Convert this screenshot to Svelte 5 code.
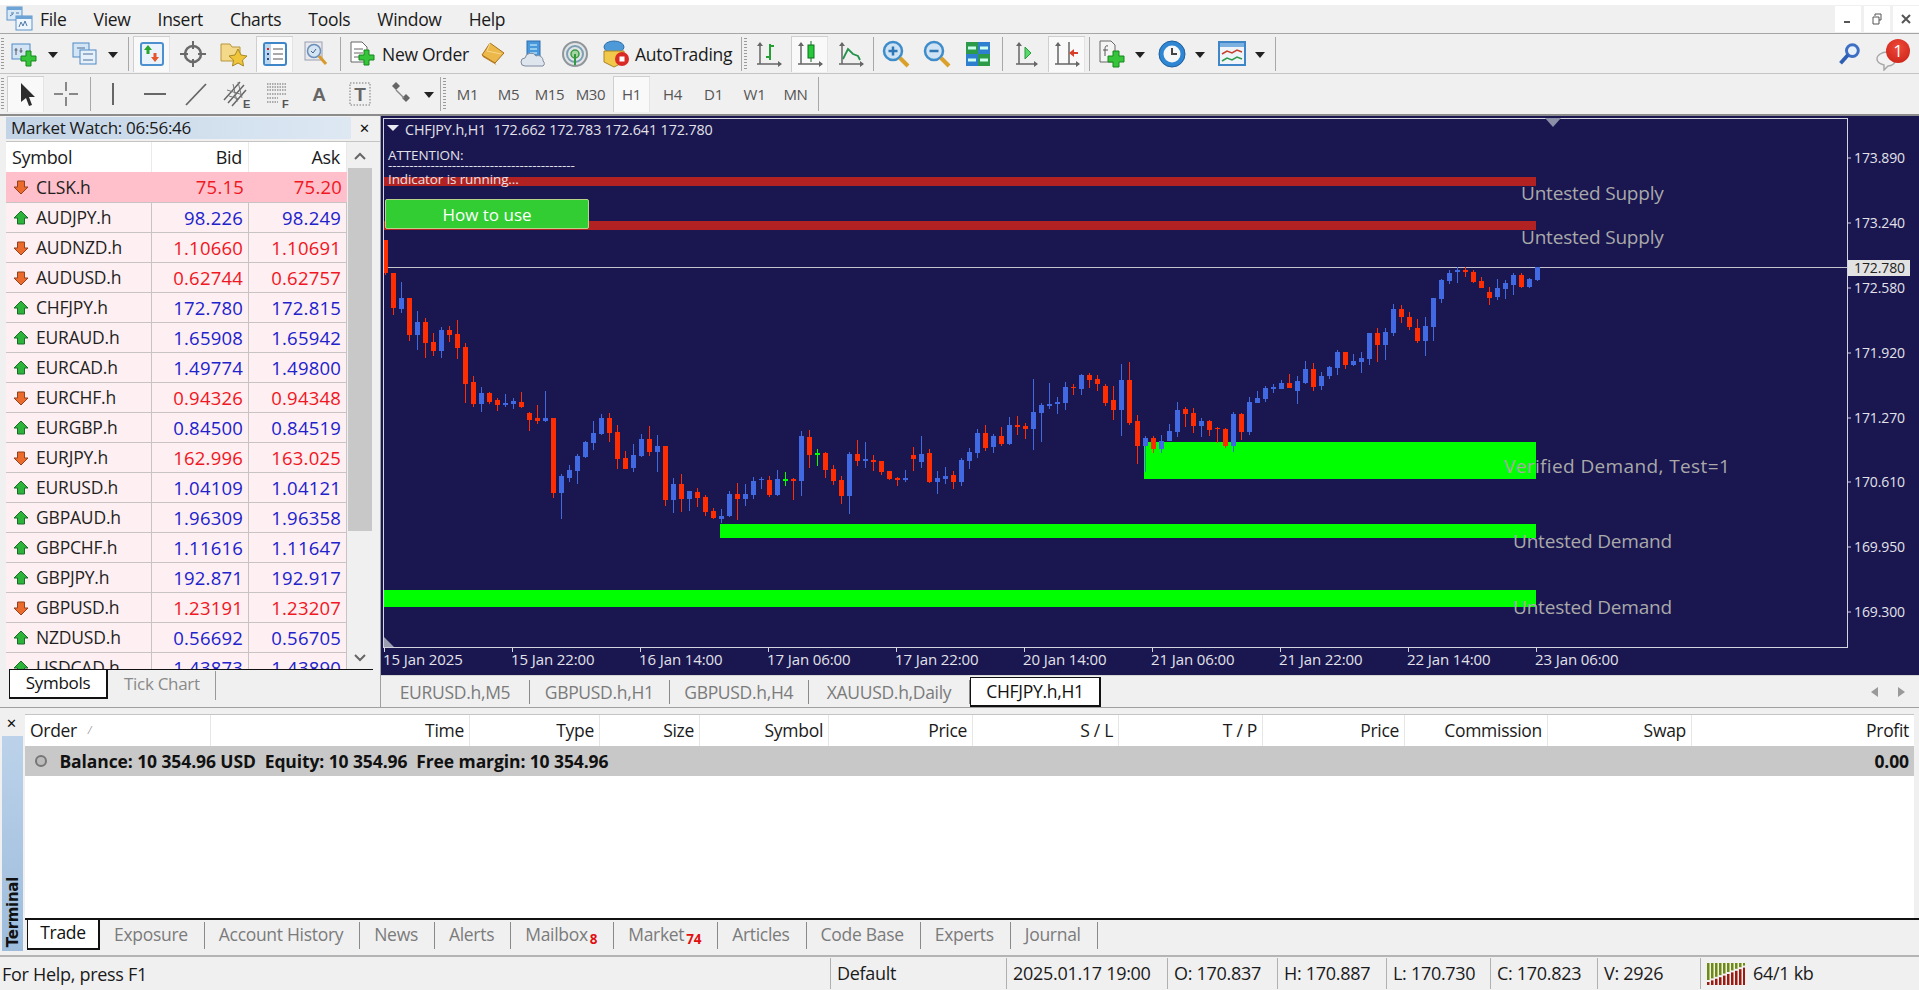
<script>
  const menu = ["File", "View", "Insert", "Charts", "Tools", "Window", "Help"];

  const quotes = [
    ["CLSK.h", "75.15", "75.20", 0],
    ["AUDJPY.h", "98.226", "98.249", 1],
    ["AUDNZD.h", "1.10660", "1.10691", 0],
    ["AUDUSD.h", "0.62744", "0.62757", 0],
    ["CHFJPY.h", "172.780", "172.815", 1],
    ["EURAUD.h", "1.65908", "1.65942", 1],
    ["EURCAD.h", "1.49774", "1.49800", 1],
    ["EURCHF.h", "0.94326", "0.94348", 0],
    ["EURGBP.h", "0.84500", "0.84519", 1],
    ["EURJPY.h", "162.996", "163.025", 0],
    ["EURUSD.h", "1.04109", "1.04121", 1],
    ["GBPAUD.h", "1.96309", "1.96358", 1],
    ["GBPCHF.h", "1.11616", "1.11647", 1],
    ["GBPJPY.h", "192.871", "192.917", 1],
    ["GBPUSD.h", "1.23191", "1.23207", 0],
    ["NZDUSD.h", "0.56692", "0.56705", 1],
    ["USDCAD.h", "1.43873", "1.43890", 1]
  ];

  const periods = ["M1", "M5", "M15", "M30", "H1", "H4", "D1", "W1", "MN"];

  // colour, wick top, body top, body bottom, wick bottom (3x px below y=230)
  const raw = [
    ["r",30,30,130,135],["r",128,128,234,255],["b",155,204,237,248],["r",204,204,315,333],["b",242,276,315,360],
    ["r",265,276,338,385],["r",310,335,362,378],["b",290,300,362,385],["r",288,300,315,335],["r",270,312,354,387],
    ["r",340,351,461,520],["r",438,456,522,530],["b",472,490,521,547],["r",487,489,516,522],["r",505,510,525,544],
    ["b",493,518,526,532],["b",505,512,522,538],["r",487,516,531,533],["r",545,548,570,603],["r",525,564,574,582],
    ["b",482,564,574,576],["r",564,564,790,805],["b",733,738,790,866],["b",705,720,744,756],["b",672,678,723,763],
    ["b",632,636,682,684],["b",572,609,639,660],["b",552,564,612,616],["r",548,564,609,636],["r",585,606,687,718],
    ["r",662,684,716,718],["b",643,675,715,726],["b",612,627,678,682],["r",588,627,666,678],["b",615,648,666,726],
    ["r",648,648,810,828],["b",745,762,810,850],["r",733,762,807,846],["b",783,784,807,843],["r",775,786,804,832],
    ["r",796,801,846,858],["r",833,843,864,866],["b",838,858,867,880],["b",783,792,858,860],["r",758,792,807,870],
    ["b",762,792,807,828],["b",742,753,795,808],["b",740,746,749,778],["r",738,750,796,800],["b",720,747,796,798],
    ["g",727,747,749,768],["r",744,747,750,810],["b",603,618,753,798],["r",600,621,675,714],["g",657,669,671,708],
    ["r",665,669,720,745],["r",706,717,753,765],["r",738,750,798,822],["b",665,672,798,852],["r",630,672,693,708],
    ["b",637,687,691,714],["r",675,690,694,722],
    ["r",693,694,726,736],["r",722,724,747,750],["r",742,744,749,768],["b",720,744,749,755],["r",650,675,688,723],
    ["b",618,672,696,714],["r",658,669,756,760],["b",723,744,756,793],["b",711,738,747,763],["r",724,735,756,778],
    ["b",683,690,756,769],["b",654,666,693,717],["b",597,609,669,684],["r",585,609,654,663],["b",612,618,651,669],
    ["r",592,618,642,648],["b",560,585,642,645],["r",558,585,591,615],["r",580,588,597,627],["b",447,546,597,660],
    ["b",520,525,548,637],["b",458,521,527,538],["b",502,516,522,553],["b",455,472,518,540],["r",462,470,474,495],
    ["b",433,434,477,496],["r",428,435,450,474],["r",435,448,461,483],["r",462,468,519,528],["r",468,510,540,570],
    ["b",402,450,540,618],["r",396,450,578,585],["r",555,573,648,702],["b",618,624,648,727],["r",618,624,656,670],
    ["b",615,632,656,670],["b",582,603,633,633],["b",516,540,606,621],["r",532,538,552,591],["r",535,549,588,608],
    ["b",565,573,588,621],["r",570,573,600,618],["r",590,593,595,638],["r",593,598,648,654],["b",545,552,648,666],
    ["r",548,552,606,630],["b",500,516,606,616],["b",484,504,520,520],["b",468,474,507,516],["b",462,472,476,490],
    ["b",450,459,477,477],["r",432,460,474,474],["b",438,453,483,522],["b",393,417,460,462],["r",398,417,471,483],
    ["b",426,438,468,480],["b",408,411,438,447],["b",360,366,414,435],["r",366,366,405,417],["b",372,393,405,408],
    ["b",367,384,396,430],["b",308,309,386,405],
    ["r",295,308,345,395],["b",295,305,345,390],["b",223,237,310,318],["r",225,237,262,280],["r",245,262,292,300],
    ["r",268,295,332,340],["b",260,288,332,378],["b",203,205,290,332],["b",148,150,207,220],["b",120,128,153,162],
    ["b",112,120,127,160],["r",112,120,127,140],["r",120,127,155,160],["r",140,153,173,175],["r",172,185,205,225],
    ["b",147,173,200,210],["b",150,160,177,208],["b",130,135,165,195],["r",130,135,170,173],["b",145,147,170,173],
    ["b",110,112,150,154]
  ];
  const py = (v) => 230 + v / 3;
  const colors = { r: "#ff2d00", b: "#4169e1", g: "#00ff00" };
  const candles = raw.map(([c, wt, bt, bb, wb], i) => ({
    x: Math.round(384.67 + 8 * i),
    fill: colors[c],
    wt: py(wt),
    bt: py(bt),
    bh: Math.max(1.5, (bb - bt) / 3),
    wb: py(wb)
  }));

  const priceAxis = [
    ["173.890", 158], ["173.240", 223], ["172.580", 288], ["171.920", 353],
    ["171.270", 418], ["170.610", 482], ["169.950", 547], ["169.300", 612]
  ];
  const timeAxis = [
    ["15 Jan 2025", 384], ["15 Jan 22:00", 512], ["16 Jan 14:00", 640], ["17 Jan 06:00", 768], ["17 Jan 22:00", 896],
    ["20 Jan 14:00", 1024], ["21 Jan 06:00", 1152], ["21 Jan 22:00", 1280], ["22 Jan 14:00", 1408], ["23 Jan 06:00", 1536]
  ];
  const zoneLabels = [
    ["Untested Supply", 1521, 193], ["Untested Supply", 1521, 237], ["Verified Demand, Test=1", 1504, 466],
    ["Untested Demand", 1513, 541], ["Untested Demand", 1513, 607]
  ];

  const chartTabs = ["EURUSD.h,M5", "GBPUSD.h,H1", "GBPUSD.h,H4", "XAUUSD.h,Daily"];
  const columns = ["Time", "Type", "Size", "Symbol", "Price", "S / L", "T / P", "Price", "Commission", "Swap", "Profit"];
  const termTabs = [
    ["Exposure", ""], ["Account History", ""], ["News", ""], ["Alerts", ""], ["Mailbox", "8"],
    ["Market", "74"], ["Articles", ""], ["Code Base", ""], ["Experts", ""], ["Journal", ""]
  ];
  const statusCells = ["Default", "2025.01.17 19:00", "O: 170.837", "H: 170.887", "L: 170.730", "C: 170.823", "V: 2926"];
  const netBars = Array.from({ length: 10 }, (_, i) => i);
</script>

<div class="app">
  <div class="topline"></div>

  <div class="menu">
    <svg class="logo" width="30" height="28" viewBox="0 0 30 28">
      <rect x="2" y="2" width="15" height="13" fill="#d9e8f7" stroke="#5d93c9"/>
      <rect x="2" y="2" width="15" height="3" fill="#6ea3d6"/>
      <path d="M6 8h3M11 8h3M5 11l3-2" stroke="#4b78a8" fill="none"/>
      <rect x="11" y="11" width="16" height="14" fill="#eef5fc" stroke="#5d93c9"/>
      <rect x="11" y="11" width="16" height="3" fill="#6ea3d6"/>
      <path d="M14 22l2-5 2 4 2-5 2 5" stroke="#4b78a8" fill="none"/>
    </svg>
    {#each menu as item}
      <span class="menu-item">{item}</span>
    {/each}
    <div class="winbtns">
      <span class="winbtn"><svg width="10" height="10" viewBox="0 0 10 10"><path d="M1 8h6" stroke="#555" stroke-width="2"/></svg></span>
      <span class="winbtn"><svg width="10" height="12" viewBox="0 0 10 12"><path d="M3 3V1h6v6H7M1 4h6v7H1z" stroke="#555" fill="none"/></svg></span>
      <span class="winbtn"><svg width="10" height="10" viewBox="0 0 10 10"><path d="M1 1l8 8M9 1l-8 8" stroke="#555" stroke-width="2"/></svg></span>
    </div>
  </div>

  <div class="toolbar">
    <i class="grip"></i>
    <button class="ib">
      <svg width="30" height="30" viewBox="0 0 30 30">
        <rect x="2" y="5" width="18" height="15" fill="#d3e4f5" stroke="#4e8ac4"/>
        <path d="M6 9v7M4.500 11h3M11 9v5M9.500 12h3" stroke="#556" fill="none"/>
        <path d="M16 12h5v5h5v5h-5v5h-5v-5h-5v-5h5z" fill="#35c43a" stroke="#16881c"/>
      </svg>
    </button>
    <i class="dd"></i>
    <button class="ib gap3">
      <svg width="30" height="30" viewBox="0 0 30 30">
        <rect x="3" y="4" width="16" height="14" fill="#d3e4f5" stroke="#4e8ac4"/>
        <rect x="10" y="11" width="16" height="14" fill="#e6f0fa" stroke="#4e8ac4"/>
        <path d="M7 9h8M13 15h10M13 21h10" stroke="#4e6f96" fill="none"/>
      </svg>
    </button>
    <i class="dd"></i>
    <i class="sep far"></i>
    <button class="ib on">
      <svg width="28" height="28" viewBox="0 0 28 28">
        <rect x="3" y="3" width="22" height="22" rx="2" fill="#eaf2fb" stroke="#4c90cf" stroke-width="2"/>
        <path d="M10 5l4 5h-2.500v4h-3v-4H6z" fill="#27a52d"/>
        <path d="M17 22l-4-5h2.500v-4h3v4H21z" fill="#e5562a"/>
      </svg>
    </button>
    <button class="ib">
      <svg width="30" height="30" viewBox="0 0 30 30">
        <circle cx="15" cy="15" r="8" fill="none" stroke="#6a6a6a" stroke-width="2.500"/>
        <path d="M15 2v8M15 20v8M2 15h8M20 15h8" stroke="#6a6a6a" stroke-width="2"/>
      </svg>
    </button>
    <button class="ib">
      <svg width="30" height="30" viewBox="0 0 30 30">
        <path d="M2 5h9l2 3h8v14H2z" fill="#f4d98a" stroke="#b8963c"/>
        <path d="M19 10l3 6 6 1-4.500 4 1 6-5.500-3-5.500 3 1-6-4.500-4 6-1z" fill="#f0c53a" stroke="#a88a22"/>
      </svg>
    </button>
    <button class="ib on">
      <svg width="28" height="28" viewBox="0 0 28 28">
        <rect x="3" y="3" width="22" height="22" rx="2" fill="#fff" stroke="#3f86c8" stroke-width="2"/>
        <rect x="4" y="4" width="6" height="20" fill="#bcd6ee"/>
        <path d="M7 8v2" stroke="#d22" stroke-width="2"/>
        <path d="M7 13v2M7 18v2" stroke="#25488a" stroke-width="2"/>
        <path d="M12 9h10M12 14h10M12 19h10" stroke="#555"/>
      </svg>
    </button>
    <button class="ib">
      <svg width="30" height="30" viewBox="0 0 30 30">
        <rect x="4" y="3" width="17" height="18" fill="#e8e8ee" stroke="#9aa0b0"/>
        <circle cx="13" cy="12" r="6.500" fill="#d5e4f2" stroke="#6a8fb8" stroke-width="1.500"/>
        <path d="M10 12l2 2 3-4" stroke="#3e5f88" fill="none"/>
        <path d="M18 17l7 8" stroke="#d99a2b" stroke-width="3"/>
      </svg>
    </button>
    <i class="sep wide"></i>
    <button class="tb order">
      <svg width="30" height="30" viewBox="0 0 30 30">
        <path d="M3 3h11l5 5v15H3z" fill="#fff" stroke="#666"/>
        <path d="M6 10h9M6 14h9M6 18h5" stroke="#666"/>
        <path d="M16 11h5v5h5v5h-5v5h-5v-5h-5v-5h5z" fill="#35c43a" stroke="#16881c"/>
      </svg>
      <span>New Order</span>
    </button>
    <button class="ib gap2">
      <svg width="30" height="30" viewBox="0 0 30 30">
        <path d="M12 4l14 10-9 10L4 16z" fill="#edb84a" stroke="#a8701c"/>
        <path d="M4 16l13 8 1.500 2L5 18z" fill="#b97a22"/>
        <path d="M12 4l-3 8 14 3" stroke="#f6d88e" fill="none"/>
      </svg>
    </button>
    <button class="ib">
      <svg width="30" height="30" viewBox="0 0 30 30">
        <rect x="8" y="2" width="13" height="18" fill="#4a98dc" stroke="#2a6fb0"/>
        <path d="M11 6h7M11 10h7M11 14h7" stroke="#dff" />
        <path d="M6 27a4 4 0 0 1 0-8 6 6 0 0 1 11-2 5 5 0 0 1 7 5 3 3 0 0 1 0 5z" fill="#dfe5ec" stroke="#7c8aa0"/>
      </svg>
    </button>
    <button class="ib">
      <svg width="30" height="30" viewBox="0 0 30 30">
        <circle cx="15" cy="15" r="12" fill="#e2e4e6" stroke="#8f9599" stroke-width="2"/>
        <circle cx="15" cy="15" r="8" fill="none" stroke="#7ba0b4" stroke-width="2"/>
        <circle cx="15" cy="15" r="4" fill="#a5d5a0" stroke="#3d9a46" stroke-width="1.500"/>
        <path d="M15 15v11" stroke="#2f9a3c" stroke-width="2"/>
      </svg>
    </button>
    <button class="tb auto">
      <svg width="30" height="30" viewBox="0 0 30 30">
        <ellipse cx="13" cy="8" rx="10" ry="6" fill="#4e9ad8" stroke="#2f6ea8"/>
        <path d="M3 12h20v11l-10 5-10-5z" fill="#f2c84a" stroke="#a8862a"/>
        <circle cx="21" cy="20" r="7" fill="#d92a25"/>
        <rect x="18.500" y="17.500" width="5" height="5" fill="#fff"/>
      </svg>
      <span>AutoTrading</span>
    </button>
    <i class="sep edge"></i>
    <i class="grip"></i>
    <button class="ib">
      <svg width="30" height="30" viewBox="0 0 30 30">
        <path d="M6 4v21M3 25h24" stroke="#666" stroke-width="1.500"/><path d="M3 7l3-4 3 4M24 22l4 3-4 3" fill="#666"/>
        <path d="M16 5v16M16 7h4M12 18h4" stroke="#23a035" stroke-width="2" fill="none"/>
      </svg>
    </button>
    <button class="ib on">
      <svg width="30" height="30" viewBox="0 0 30 30">
        <path d="M6 4v21M3 25h24" stroke="#666" stroke-width="1.500"/><path d="M3 7l3-4 3 4M24 22l4 3-4 3" fill="#666"/>
        <path d="M16 2v21" stroke="#116e20"/><rect x="13" y="6" width="6" height="13" fill="#27c83a" stroke="#116e20"/>
      </svg>
    </button>
    <button class="ib">
      <svg width="30" height="30" viewBox="0 0 30 30">
        <path d="M6 4v21M3 25h24" stroke="#666" stroke-width="1.500"/><path d="M3 7l3-4 3 4M24 22l4 3-4 3" fill="#666"/>
        <path d="M7 20l5-10 5 5 5 2 2 4" stroke="#23924a" stroke-width="1.800" fill="none"/>
      </svg>
    </button>
    <i class="sep"></i>
    <button class="ib">
      <svg width="30" height="30" viewBox="0 0 30 30">
        <circle cx="12" cy="12" r="9" fill="#cfe3f5" stroke="#3f8ccb" stroke-width="2.500"/>
        <path d="M7.500 12h9M12 7.500v9" stroke="#2f76b5" stroke-width="2.500"/>
        <path d="M19 19l8 8" stroke="#d9a02b" stroke-width="4"/>
      </svg>
    </button>
    <button class="ib">
      <svg width="30" height="30" viewBox="0 0 30 30">
        <circle cx="12" cy="12" r="9" fill="#cfe3f5" stroke="#3f8ccb" stroke-width="2.500"/>
        <path d="M7.500 12h9" stroke="#2f76b5" stroke-width="2.500"/>
        <path d="M19 19l8 8" stroke="#d9a02b" stroke-width="4"/>
      </svg>
    </button>
    <button class="ib">
      <svg width="30" height="30" viewBox="0 0 30 30">
        <rect x="3" y="3" width="12" height="12" fill="#2b9b4a"/><rect x="15" y="3" width="12" height="12" fill="#2f7fd0"/>
        <rect x="3" y="15" width="12" height="12" fill="#2f7fd0"/><rect x="15" y="15" width="12" height="12" fill="#2b9b4a"/>
        <path d="M5 9h8M17 9h8M5 21h8M17 21h8" stroke="#cfe" stroke-width="3"/>
      </svg>
    </button>
    <i class="sep wide"></i>
    <button class="ib">
      <svg width="30" height="30" viewBox="0 0 30 30">
        <path d="M8 4v21M5 25h21" stroke="#666" stroke-width="1.500"/><path d="M5 7l3-4 3 4M23 22l4 3-4 3" fill="#666"/>
        <path d="M14 8l6 6-6 6z" fill="#59d86a" stroke="#2a9a3a"/>
      </svg>
    </button>
    <button class="ib on">
      <svg width="30" height="30" viewBox="0 0 30 30">
        <path d="M6 4v21M3 25h24M17 3v22" stroke="#666" stroke-width="1.500"/><path d="M3 7l3-4 3 4M24 22l4 3-4 3" fill="#666"/>
        <path d="M26 13h-4v-3l-5 4 5 4v-3h4z" fill="#d8402a"/>
      </svg>
    </button>
    <i class="sep"></i>
    <button class="ib">
      <svg width="30" height="30" viewBox="0 0 30 30">
        <path d="M3 2h11l4 4v17H3z" fill="#f4f4f4" stroke="#666"/>
        <path d="M11 7c-3-1-3 2-3 4v6M6 11h5" stroke="#555" fill="none"/>
        <path d="M16 12h6v5h5v6h-5v5h-6v-5h-5v-6h5z" fill="#35c43a" stroke="#16881c"/>
      </svg>
    </button>
    <i class="dd"></i>
    <button class="ib gap3">
      <svg width="30" height="30" viewBox="0 0 30 30">
        <circle cx="15" cy="15" r="13" fill="#2f86d2" stroke="#1e5f9e"/>
        <circle cx="15" cy="15" r="8.500" fill="#f4f6f8"/>
        <path d="M15 9v6h5" stroke="#444" stroke-width="2" fill="none"/>
      </svg>
    </button>
    <i class="dd"></i>
    <button class="ib gap3">
      <svg width="30" height="30" viewBox="0 0 30 30">
        <rect x="2" y="3" width="26" height="23" fill="#eef4fa" stroke="#3f86c8" stroke-width="2"/>
        <rect x="3" y="4" width="24" height="4" fill="#7cb0e0"/>
        <path d="M5 15l5-3 5 2 5-3 5 2" stroke="#c8402a" stroke-width="1.500" fill="none"/>
        <path d="M5 22l5-3 5 2 5-3 5 2" stroke="#2f9a4a" stroke-width="1.500" fill="none"/>
      </svg>
    </button>
    <i class="dd"></i>
    <i class="sep far"></i>
    <div class="tool-right">
      <svg width="22" height="22" viewBox="0 0 26 26">
        <circle cx="17" cy="9" r="7" fill="#e8f0fa" stroke="#3f6fc4" stroke-width="3.500"/>
        <path d="M12 14l-9 10" stroke="#2f5fb4" stroke-width="4.500"/>
      </svg>
      <div class="notice">
        <svg class="bubble" width="22" height="20" viewBox="0 0 22 20">
          <path d="M11 1c5 0 9 3 9 7s-4 7-8 7l-4 4v-5c-4-1-7-3-7-6 0-4 5-7 10-7z" fill="#f2f2f2" stroke="#a8a8a8" stroke-width="1.500"/>
        </svg>
        <span class="badge">1</span>
      </div>
    </div>
  </div>

  <div class="toolbar second">
    <i class="grip"></i>
    <button class="ib on first">
      <svg width="28" height="28" viewBox="0 0 28 28"><path d="M9 3v19l5-4 3 8 3-1-3-8h6z" fill="#2d2d2d"/></svg>
    </button>
    <button class="ib">
      <svg width="28" height="28" viewBox="0 0 28 28"><path d="M14 2v9M14 17v9M2 14h9M17 14h9" stroke="#666" stroke-width="1.500"/></svg>
    </button>
    <i class="sep wide"></i>
    <button class="ib"><svg width="28" height="28" viewBox="0 0 28 28"><path d="M13 3v22" stroke="#666" stroke-width="2"/></svg></button>
    <button class="ib"><svg width="28" height="28" viewBox="0 0 28 28"><path d="M3 14h22" stroke="#666" stroke-width="2"/></svg></button>
    <button class="ib"><svg width="28" height="28" viewBox="0 0 28 28"><path d="M4 25L24 4" stroke="#666" stroke-width="1.800"/></svg></button>
    <button class="ib">
      <svg width="30" height="30" viewBox="0 0 30 30">
        <path d="M2 21L18 3M6 24L22 6M10 27L24 11" stroke="#666" stroke-width="1.500"/>
        <path d="M5 11l16 5M7 17l10 3M11 5l4 18M16 3l4 16" stroke="#777"/>
        <text x="21" y="29" class="mini">E</text>
      </svg>
    </button>
    <button class="ib">
      <svg width="30" height="30" viewBox="0 0 30 30">
        <path d="M4 5h19M4 8h19M4 11h19M4 15h19M4 19h11M4 23h11" stroke="#666" stroke-dasharray="1.500 1"/>
        <text x="19" y="29" class="mini">F</text>
      </svg>
    </button>
    <button class="ib"><svg width="28" height="28" viewBox="0 0 28 28"><text x="14" y="21" text-anchor="middle" class="glyph">A</text></svg></button>
    <button class="ib">
      <svg width="28" height="28" viewBox="0 0 28 28">
        <rect x="4" y="3" width="20" height="22" fill="none" stroke="#777" stroke-dasharray="1.500 1.500"/>
        <text x="14" y="21" text-anchor="middle" class="glyph">T</text>
      </svg>
    </button>
    <button class="ib">
      <svg width="30" height="30" viewBox="0 0 30 30">
        <path d="M10 3l4 4-4 4-4-4zM20 15l4 4-4 4-4-4z" fill="#666"/>
        <path d="M10 11l8 8" stroke="#888" stroke-width="1.500"/>
      </svg>
    </button>
    <i class="dd"></i>
    <i class="sep edge"></i>
    <i class="grip"></i>
    {#each periods as p}
      <button class="ib per" class:on={p === "H1"}>{p}</button>
    {/each}
    <i class="sep"></i>
  </div>

  <div class="work">
    <aside class="watch">
      <div class="watch-title">
        <span class="watch-name">Market Watch: 06:56:46</span>
        <span class="close">✕</span>
      </div>
      <div class="watch-body">
        <div class="quotes">
          <div class="qhead">
            <span>Symbol</span><span>Bid</span><span>Ask</span>
          </div>
          {#each quotes as [sym, bid, ask, up], i}
            <div class="qrow" class:hot={i === 0} class:up={up === 1}>
              <span class="qsym">
                <svg width="16" height="16" viewBox="0 0 16 16">
                  {#if up}
                    <path d="M8 1l7 7h-3.500v6h-7V8H1z" fill="#2eb33a" stroke="#1a6b2a"/>
                  {:else}
                    <path d="M8 15L1 8h3.500V2h7v6H15z" fill="#ec6a2c" stroke="#93401c"/>
                  {/if}
                </svg>
                {sym}
              </span>
              <span class="qval">{bid}</span>
              <span class="qval">{ask}</span>
            </div>
          {/each}
        </div>
        <div class="scroll">
          <svg width="14" height="10" viewBox="0 0 14 10"><path d="M2 8l5-5 5 5" stroke="#666" stroke-width="2" fill="none"/></svg>
          <div class="thumb"></div>
          <svg class="down" width="14" height="10" viewBox="0 0 14 10"><path d="M2 2l5 5 5-5" stroke="#666" stroke-width="2" fill="none"/></svg>
        </div>
      </div>
      <div class="watch-tabs">
        <span class="wtab on">Symbols</span>
        <span class="wtab">Tick Chart</span>
      </div>
    </aside>

    <section class="chart">
      <svg class="plot" viewBox="381 116 1538 559" width="1538" height="559">
        <defs>
          <clipPath id="plotclip"><rect x="384" y="119" width="1463" height="528"/></clipPath>
        </defs>
        <rect x="381" y="116" width="1538" height="559" fill="#191650"/>
        <rect x="383.500" y="118.500" width="1464" height="529" fill="none" stroke="#d4d4de"/>
        <path d="M1545 118h16l-8 9z" fill="#8b90a8"/>
        <path d="M384 637l10 10h-10z" fill="#9a9eb0"/>

        <rect x="384" y="177" width="1152" height="9" fill="#b22222"/>
        <rect x="384" y="221" width="1152" height="9" fill="#b22222"/>
        <rect x="1144" y="442" width="392" height="37" fill="#00ff00"/>
        <rect x="720" y="524" width="816" height="14" fill="#00ff00"/>
        <rect x="384" y="590" width="1152" height="17" fill="#00ff00"/>

        <path d="M384 267.500H1847" stroke="#c4c4cc"/>

        <g clip-path="url(#plotclip)" shape-rendering="crispEdges">
          {#each candles as c}
            <rect x={c.x} y={c.wt} width="1" height={c.wb - c.wt} fill={c.fill}/>
            <rect x={c.x - 2} y={c.bt} width="5" height={c.bh} fill={c.fill}/>
          {/each}
        </g>

        {#each priceAxis as [label, y]}
          <path d="M1848 {y}h3" stroke="#d4d4de"/>
          <text x="1854" y={y + 5} class="axis">{label}</text>
        {/each}
        <rect x="1848" y="260" width="62" height="16" fill="#e2e2e2"/>
        <text x="1854" y="273" class="axis dark">172.780</text>

        {#each timeAxis as [label, x]}
          <path d="M{x + 0.5} 648v4" stroke="#d4d4de"/>
          <text x={x - 1} y="665" class="axis time">{label}</text>
        {/each}

        <text x="405" y="135" class="axis title">CHFJPY.h,H1  172.662 172.783 172.641 172.780</text>
        <path d="M387 125h12l-6 6z" fill="#e8e8f0"/>
        <text x="388" y="160" class="axis note">ATTENTION:</text>
        <text x="388" y="170" class="axis note">--------------------------------------------</text>
        <text x="388" y="184" class="axis note">Indicator is running...</text>

        {#each zoneLabels as [label, x, y]}
          <text x={x} y={y + 7} class="zone" class:verified={label.startsWith("Verified")}>{label}</text>
        {/each}
      </svg>
      <button class="howto">How to use</button>

      <div class="chart-tabs">
        {#each chartTabs as tab}
          <span class="ctab">{tab}</span>
        {/each}
        <span class="ctab on">CHFJPY.h,H1</span>
        <span class="ctab-arrows">
          <svg width="8" height="10" viewBox="0 0 8 10"><path d="M7 0v10L0 5z" fill="#999"/></svg>
          <svg width="8" height="10" viewBox="0 0 8 10"><path d="M1 0v10l7-5z" fill="#999"/></svg>
        </span>
      </div>
    </section>
  </div>

  <section class="terminal">
    <div class="term-side">
      <span class="close">✕</span>
      <div class="term-strip"><span>Terminal</span></div>
    </div>
    <div class="term-main">
      <div class="term-grid thead">
        <span class="left">Order <small>⁄</small></span>
        {#each columns as col}
          <span>{col}</span>
        {/each}
      </div>
      <div class="balance">
        <span class="bal-text">
          <svg width="14" height="14" viewBox="0 0 14 14"><circle cx="7" cy="7" r="5" fill="#bbb" stroke="#777" stroke-width="2"/></svg>
          Balance: 10 354.96 USD&nbsp; Equity: 10 354.96&nbsp; Free margin: 10 354.96
        </span>
        <span>0.00</span>
      </div>
      <div class="term-empty"></div>
      <div class="term-tabs">
        <span class="ttab on">Trade</span>
        {#each termTabs as [name, count]}
          <span class="ttab">{name}{#if count}<b>{count}</b>{/if}</span>
        {/each}
      </div>
    </div>
  </section>

  <footer class="status">
    <span class="help">For Help, press F1</span>
    {#each statusCells as cell}
      <span class="cell">{cell}</span>
    {/each}
    <span class="cell net">
      <svg width="38" height="22" viewBox="0 0 38 22">
        {#each netBars as i}
          <rect x={i * 4} y="0" width="2.500" height={17 - i * 1.600} fill="#6f8a12"/>
          <rect x={i * 4} y={19 - i * 1.600} width="2.500" height={3 + i * 1.600} fill="#9c1a10"/>
        {/each}
      </svg>
      64/1 kb
    </span>
  </footer>
</div>

<style>
  :global(body) {
    margin: 0;
    background: #f0f0f0;
  }

  .app {
    width: 1919px;
    height: 990px;
    overflow: hidden;
    display: flex;
    flex-direction: column;
    background: #f0f0f0;
    font-family: "Open Sans", "Noto Sans", sans-serif;
    font-size: 16px;
    letter-spacing: -0.3px;
    color: #1a1a1a;
  }

  button {
    border: 0;
    background: none;
    padding: 0;
    font: inherit;
    letter-spacing: inherit;
    color: inherit;
  }

  .topline {
    height: 5px;
    background: #fff;
    flex: none;
  }

  /* menu */

  .menu {
    height: 29px;
    flex: none;
    display: flex;
    align-items: center;
    border-bottom: 1px solid #a6a6a6;
    box-sizing: border-box;
    padding-left: 5px;
    position: relative;
  }

  .logo {
    margin-right: 5px;
  }

  .menu-item {
    margin-right: 27px;
    font-size: 17.500px;
  }

  .winbtns {
    margin-left: auto;
    display: flex;
    gap: 3px;
    align-self: flex-start;
    margin-top: 1px;
  }

  .winbtn {
    width: 26px;
    height: 26px;
    background: #fff;
    display: flex;
    align-items: center;
    justify-content: center;
  }

  /* toolbars */

  .toolbar {
    height: 40px;
    flex: none;
    display: flex;
    align-items: center;
    box-sizing: border-box;
    border-bottom: 1px solid #c4c4c4;
    position: relative;
  }

  .toolbar.second {
    height: 42px;
    border-bottom: 2px solid #8c8c8c;
  }

  .grip {
    width: 3px;
    height: 32px;
    flex: none;
    margin: 0 1px 0 0;
    background: repeating-linear-gradient(#9a9a9a 0 1px, transparent 1px 3px);
  }

  .toolbar > .grip:first-child {
    margin-left: 1px;
    margin-right: 0;
  }

  .ib {
    width: 41px;
    height: 36px;
    flex: none;
    display: flex;
    align-items: center;
    justify-content: center;
    box-sizing: border-box;
  }

  .ib.on {
    background: #f9f9f9;
    box-shadow: inset 1px 1px 0 #cfcfcf, inset -1px 0 0 #e4e4e4;
    margin: 0 2px;
    width: 37px;
  }

  .ib.first {
    margin-left: 3px;
    margin-right: 1px;
  }

  .ib.gap2 {
    margin-left: 2px;
  }

  .ib.gap3 {
    margin-left: 3px;
  }

  .ib.per {
    font-family: "Open Sans", sans-serif;
    font-size: 15px;
    color: #555;
  }

  .dd {
    width: 16px;
    flex: none;
    height: 12px;
    position: relative;
  }

  .dd::after {
    content: "";
    position: absolute;
    left: 3px;
    top: 4px;
    border: 5px solid transparent;
    border-top: 6px solid #222;
    border-bottom: 0;
  }

  .sep {
    width: 1px;
    height: 34px;
    flex: none;
    background: #a8a8a8;
    margin: 0 1px 0 2px;
  }

  .sep.wide {
    margin: 0 2px 0 4px;
  }

  .sep.far {
    margin: 0 2px 0 7px;
  }

  .sep.edge {
    margin: 0 2px 0 3px;
  }

  .tb {
    height: 36px;
    flex: none;
    display: flex;
    align-items: center;
    box-sizing: border-box;
    padding-left: 5px;
    gap: 4px;
    font-size: 17.500px;
  }

  .tb.order {
    width: 127px;
  }

  .tb.auto {
    width: 142px;
    margin-left: 1px;
  }

  .tool-right {
    margin-left: auto;
    display: flex;
    align-items: center;
    gap: 13px;
    padding-right: 20px;
  }

  .notice {
    position: relative;
    width: 26px;
    height: 26px;
  }

  .bubble {
    display: block;
    margin: 10px 0 0 3px;
  }

  .badge {
    position: absolute;
    left: 13px;
    top: -2px;
    width: 24px;
    height: 24px;
    border-radius: 50%;
    background: radial-gradient(circle at 50% 35%, #ef4a3a, #c81e14);
    color: #fff;
    font-size: 17px;
    line-height: 24px;
    text-align: center;
  }

  .notice {
    margin-right: 0;
  }

  .mini {
    font: bold 11px "Liberation Sans", sans-serif;
    fill: #555;
  }

  .glyph {
    font: bold 19px "Liberation Sans", sans-serif;
    fill: #666;
  }

  /* work area */

  .work {
    height: 592px;
    flex: none;
    display: flex;
  }

  .watch {
    width: 381px;
    flex: none;
    box-sizing: border-box;
    display: flex;
    flex-direction: column;
    padding-left: 6px;
    border-right: 1px solid #a0a0a0;
    border-bottom: 1px solid #a0a0a0;
  }

  .watch-title {
    height: 22px;
    margin-top: 1px;
    display: flex;
    align-items: center;
    flex: none;
  }

  .watch-name {
    width: 345px;
    height: 100%;
    box-sizing: border-box;
    padding-left: 5px;
    line-height: 22px;
    background: linear-gradient(90deg, #c3d4e6, #dde8f3);
    font-size: 17px;
  }

  .close {
    font: bold 13px "DejaVu Sans", sans-serif;
    color: #111;
    margin-left: 8px;
  }

  .watch-body {
    margin-top: 2px;
    height: 528px;
    flex: none;
    display: flex;
    overflow: hidden;
    border-top: 1px solid #c4c4c4;
    box-sizing: border-box;
    padding-right: 7px;
  }

  .quotes {
    width: 341px;
    flex: none;
  }

  .qhead,
  .qrow {
    display: grid;
    grid-template-columns: 146px 97px 98px;
  }

  .qhead {
    height: 30px;
    align-items: center;
    background: #fff;
    font-size: 18px;
  }

  .qhead span {
    height: 100%;
    line-height: 30px;
    padding: 0 6px;
    box-sizing: border-box;
    border-right: 1px solid #eaeaea;
  }

  .qhead span + span {
    text-align: right;
  }

  .qrow {
    height: 30px;
    box-sizing: border-box;
    background: #fdeff2;
    border-top: 1px solid #c8c4c6;
    font-size: 18.500px;
    letter-spacing: 0.2px;
    color: #f01622;
  }

  .qrow.up {
    color: #2222cc;
  }

  .qrow.hot {
    background: #ffc0cb;
    border-top: 0;
  }

  .qrow > span {
    line-height: 29px;
    box-sizing: border-box;
    border-right: 1px solid #c8c4c6;
    padding-right: 5px;
    text-align: right;
  }

  .qrow.hot > span {
    border-right: 0;
  }

  .qrow > .qsym {
    display: flex;
    align-items: center;
    gap: 7px;
    padding-left: 7px;
    color: #1f1f1f;
    text-align: left;
    font-size: 17.500px;
    letter-spacing: -0.2px;
  }

  .scroll {
    width: 24px;
    margin-left: 1px;
    flex: none;
    display: flex;
    flex-direction: column;
    align-items: center;
    position: relative;
  }

  .scroll > svg {
    margin-top: 9px;
  }

  .thumb {
    width: 100%;
    height: 363px;
    margin-top: 7px;
    background: #c8c8c8;
  }

  .scroll .down {
    margin-top: auto;
    margin-bottom: 6px;
  }

  .watch-tabs {
    margin-left: 3px;
    margin-right: 7px;
    height: 38px;
    flex: none;
    border-top: 1px solid #111;
    display: flex;
    align-items: flex-start;
  }

  .wtab {
    height: 29px;
    line-height: 26px;
    box-sizing: border-box;
    font-size: 17px;
    color: #8a8a8a;
    padding: 0 15px 0 16px;
    position: relative;
    border-right: 1px solid #999;
    margin-top: 1px;
  }

  .wtab.on {
    width: 99px;
    height: 29px;
    margin-top: 0;
    text-align: center;
    padding: 0;
    background: #fff;
    color: #111;
    border: 1px solid #111;
    border-width: 0 2px 2px 1px;
  }

  .chart {
    flex: 1;
    min-width: 0;
    display: flex;
    flex-direction: column;
    position: relative;
  }

  .plot {
    display: block;
    flex: none;
  }

  .axis {
    font-family: "Open Sans", sans-serif;
    font-size: 14px;
    letter-spacing: -0.1px;
    fill: #e2e2e8;
    white-space: pre;
  }

  .axis.time {
    font-size: 15px;
  }

  .axis.title {
    font-size: 14.300px;
  }

  .axis.note {
    font-size: 13.500px;
  }

  .axis.dark {
    fill: #222;
  }

  .zone {
    font-family: "Open Sans", sans-serif;
    font-size: 19px;
    letter-spacing: -0.2px;
    fill: #a9a9a9;
  }

  .zone.verified {
    letter-spacing: 0.38px;
  }

  /* the indicator's button sits on top of the plot */
  .howto {
    position: absolute;
    left: 4px;
    top: 83px;
    width: 204px;
    height: 30px;
    box-sizing: border-box;
    background: #32cd32;
    border: 1px solid #b8d48a;
    border-radius: 2px;
    color: #fff;
    font-size: 17px;
    letter-spacing: 0;
  }

  .chart-tabs {
    height: 33px;
    flex: none;
    display: flex;
    align-items: center;
    border-top: 1px solid #d6d6d6;
    border-bottom: 1px solid #a0a0a0;
    box-sizing: border-box;
    font-size: 17.500px;
  }

  .ctab {
    height: 24px;
    line-height: 24px;
    color: #7b7b7b;
    border-right: 1px solid #8a8a8a;
    width: 139.500px;
    box-sizing: border-box;
    text-align: center;
  }

  .ctab:nth-child(1) {
    width: 149px;
  }

  .ctab:nth-child(4) {
    width: 161px;
  }

  .ctab.on {
    width: 131px;
    height: 30px;
    line-height: 27px;
    background: #fff;
    color: #111;
    border: 1px solid #111;
    border-width: 1px 2px 2px 1px;
  }

  .ctab-arrows {
    margin-left: auto;
    display: flex;
    gap: 18px;
    padding-right: 14px;
  }

  /* terminal */

  .terminal {
    height: 247px;
    flex: none;
    display: flex;
  }

  .term-side {
    width: 24px;
    flex: none;
    display: flex;
    flex-direction: column;
    align-items: flex-start;
  }

  .term-side .close {
    margin: 8px 0 0 6px;
    height: 20px;
  }

  .term-strip {
    margin: 0 0 4px 2px;
    width: 21px;
    flex: 1;
    background: linear-gradient(#bcd2ea, #9dbcdc);
    display: flex;
    align-items: flex-end;
    justify-content: center;
  }

  .term-strip span {
    writing-mode: vertical-rl;
    transform: rotate(180deg);
    font: bold 15px "DejaVu Sans", sans-serif;
    color: #111;
    padding-top: 4px;
  }

  .term-main {
    flex: 1;
    min-width: 0;
    display: flex;
    flex-direction: column;
    padding: 6px 5px 0 1px;
  }

  .term-grid {
    display: grid;
    grid-template-columns: 186px 259px 130px 100px 129px 144px 146px 144px 142px 143px 144px 222px;
    flex: none;
  }

  .thead {
    height: 32px;
    background: #fff;
    border-top: 1px solid #c4c4c4;
    box-sizing: border-box;
    font-size: 17.500px;
  }

  .thead span {
    line-height: 31px;
    padding: 0 5px;
    text-align: right;
    border-right: 1px solid #e6e6e6;
    box-sizing: border-box;
  }

  .thead span:last-child {
    border-right: 0;
  }

  .thead .left {
    text-align: left;
  }

  .thead small {
    color: #888;
    font-size: 10px;
    margin-left: 8px;
    vertical-align: 3px;
  }

  .balance {
    height: 30px;
    flex: none;
    background: #c8c8c8;
    display: flex;
    justify-content: space-between;
    align-items: center;
    font-weight: 700;
    font-size: 17.500px;
    letter-spacing: -0.1px;
    padding: 0 5px 0 9px;
    color: #111;
  }

  .bal-text {
    display: flex;
    align-items: center;
    gap: 7px;
    white-space: pre;
  }

  .term-empty {
    flex: 1;
    background: #fff;
  }

  .term-tabs {
    height: 37px;
    flex: none;
    display: flex;
    align-items: flex-start;
    border-top: 2px solid #111;
    box-sizing: border-box;
    margin-right: -5px;
    padding-left: 2px;
    font-size: 17.500px;
  }

  .ttab {
    height: 27px;
    line-height: 25px;
    margin-top: 2px;
    padding: 0 16px 0 14px;
    color: #7b7b7b;
    border-right: 1px solid #8a8a8a;
    white-space: nowrap;
  }

  .ttab.on {
    width: 73px;
    height: 30px;
    margin-top: 0;
    padding: 0;
    box-sizing: border-box;
    text-align: center;
    background: #fff;
    color: #111;
    border: 1px solid #111;
    border-width: 0 2px 2px 1px;
  }

  .ttab b {
    color: #e01010;
    font-size: 13.500px;
    margin-left: 2px;
    vertical-align: -3px;
  }

  /* status bar */

  .status {
    height: 35px;
    flex: 1;
    display: flex;
    align-items: center;
    border-top: 2px solid #b4b4b4;
    box-sizing: border-box;
    font-size: 18px;
  }

  .help {
    width: 830px;
    padding-left: 2px;
    box-sizing: border-box;
    flex: none;
  }

  .cell {
    height: 31px;
    line-height: 31px;
    flex: none;
    box-sizing: border-box;
    padding-left: 6px;
    border-left: 1px solid #b0b0b0;
    white-space: nowrap;
  }

  .cell:nth-child(2) { width: 176px; }
  .cell:nth-child(3) { width: 161px; }
  .cell:nth-child(4) { width: 110px; }
  .cell:nth-child(5) { width: 109px; }
  .cell:nth-child(6) { width: 104px; }
  .cell:nth-child(7) { width: 107px; }
  .cell:nth-child(8) { width: 103px; }

  .cell.net {
    display: flex;
    align-items: center;
    gap: 8px;
  }
</style>
